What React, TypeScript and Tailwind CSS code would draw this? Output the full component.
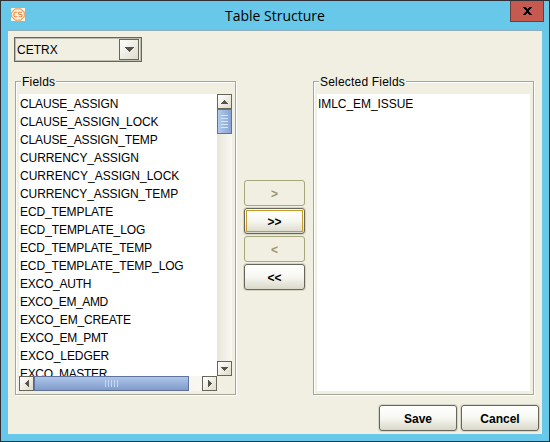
import type { ReactNode } from "react";

const FIELDS: [string, string][] = [
  ["CLAUSE_ASSIGN", "tracking-[-0.14px]"],
  ["CLAUSE_ASSIGN_LOCK", "tracking-[-0.05px]"],
  ["CLAUSE_ASSIGN_TEMP", "tracking-[-0.14px]"],
  ["CURRENCY_ASSIGN", "tracking-[-0.08px]"],
  ["CURRENCY_ASSIGN_LOCK", "tracking-[0px]"],
  ["CURRENCY_ASSIGN_TEMP", "tracking-[-0.1px]"],
  ["ECD_TEMPLATE", "tracking-[-0.12px]"],
  ["ECD_TEMPLATE_LOG", "tracking-[-0.07px]"],
  ["ECD_TEMPLATE_TEMP", "tracking-[-0.15px]"],
  ["ECD_TEMPLATE_TEMP_LOG", "tracking-[-0.14px]"],
  ["EXCO_AUTH", "tracking-[-0.24px]"],
  ["EXCO_EM_AMD", "tracking-[-0.38px]"],
  ["EXCO_EM_CREATE", "tracking-[-0.17px]"],
  ["EXCO_EM_PMT", "tracking-[-0.26px]"],
  ["EXCO_LEDGER", "tracking-[-0.08px]"],
  ["EXCO_MASTER", "tracking-[-0.33px]"],
];

function Arrow({ dir }: { dir: "up" | "down" | "left" | "right" }) {
  const d = {
    up: "M3 0h1v1h1v1h1v1h1v1H0V3h1V2h1V1h1z",
    down: "M0 0h7v1H6v1H5v1H4v1H3V3H2V2H1V1H0z",
    left: "M3 0h1v7H3V6H2V5H1V4H0V3h1V2h1V1h1z",
    right: "M0 0h1v1h1v1h1v1h1v1H3v1H2v1H1v1H0z",
  }[dir];
  const flat = dir === "up" || dir === "down";
  return (
    <svg width={flat ? 7 : 4} height={flat ? 4 : 7} shapeRendering="crispEdges">
      <path d={d} fill="#55554b" />
    </svg>
  );
}

function ScrollButton({ dir }: { dir: "up" | "down" | "left" | "right" }) {
  return (
    <div className="flex h-[15px] w-[15px] shrink-0 items-center justify-center border border-[#666659] bg-gradient-to-br from-white to-[#dedccb]">
      <Arrow dir={dir} />
    </div>
  );
}

function Button({ label, width, state = "" }: { label: string; width: string; state?: "" | "focus" | "disabled" }) {
  const look =
    state === "disabled"
      ? "border border-[#a6a77b] text-[#97976f]"
      : "border border-[#66665a] bg-gradient-to-b from-white via-[#f7f7f2] to-[#dad8c8] text-black shadow-[0_0_0_1px_#d5d5c5]";
  return (
    <button className={`flex h-[26px] shrink-0 items-center justify-center rounded-[3px] ${width} ${look}`}>
      {state === "focus" ? (
        <span className="flex h-[22px] w-[57px] items-center justify-center border border-[#c69b27] pt-px">{label}</span>
      ) : (
        <span className="pt-px">{label}</span>
      )}
    </button>
  );
}

function Group({ title, children }: { title: string; children: ReactNode }) {
  return (
    <section className="relative h-[314px] w-[221px] shrink-0 border border-[#a5a699] pl-[3px] pt-3 shadow-[1px_1px_0_#fff,inset_1px_1px_0_#fff]">
      <h2 className="absolute -top-2 left-[5px] bg-[#f1efe2] px-px text-[12px] leading-4 tracking-[0.2px]">{title}</h2>
      {children}
    </section>
  );
}

export default function App() {
  return (
    <main className="flex h-[442px] w-[550px] flex-col overflow-hidden border border-[#302f36] bg-[#67c8ea] font-['Liberation_Sans',Arial,sans-serif] text-[12px] text-black">
      <header className="flex h-[29px] shrink-0 items-start">
        <svg className="ml-[10px] mt-[7px] shrink-0" width="14" height="13" viewBox="0 0 14 13">
          <path fill="#fff5e6" d="M0 0h14v13H0z" />
          <path d="M4.3.8h5.4l3.6 3.4v4.6l-3.6 3.4H4.3L.7 8.8V4.2z" fill="#fff0dc" stroke="#f0a260" strokeWidth="1.2" />
          <path d="M6.4 4.2H4L3 5.2v2.6l1 1h2.4M11 4.2H8.3l-.7.7v.9l.7.7h1.9l.8.7v.8l-.8.8H7.6" fill="none" stroke="#ed873d" strokeWidth="1.1" />
        </svg>
        <h1 className="ml-[200px] mt-[5px] whitespace-nowrap font-['Open_Sans',sans-serif] text-[14px] leading-5">Table Structure</h1>
        <button className="ml-auto mr-[5px] flex h-[21px] w-[34px] items-center justify-center border border-t-0 border-[#6d3c39] bg-[#c65a50]">
          <svg width="9" height="8" shapeRendering="crispEdges">
            <path d="M0 0h3v1h1v1h1V1h1V0h3v1H8v1H7v1H6v2h1v1h1v1h1v1H6V7H5V6H4v1H3v1H0V7h1V6h1V5h1V3H2V2H1V1H0z" />
          </svg>
        </button>
      </header>
      <div className="mx-[7px] flex h-[404px] w-[534px] flex-col border-t border-[#91adb5] bg-[#f1efe2]">
        <div className="ml-[6px] mt-[6px] flex h-[25px] w-[128px] shrink-0 items-center justify-between border border-[#66665a] pl-[2px] pr-[2px] shadow-[inset_0_0_0_1px_#bdbdaf]">
          <span className="pt-px text-[12px]">CETRX</span>
          <div className="flex h-[21px] w-[20px] items-center justify-center border border-[#66665a] bg-gradient-to-br from-white to-[#dedccb]">
            <svg width="9" height="5" shapeRendering="crispEdges">
              <path d="M0 0h9v1H8v1H7v1H6v1H5v1H4V4H3V3H2V2H1V1H0z" fill="#55554b" />
            </svg>
          </div>
        </div>
        <div className="ml-[7px] mt-[19px] flex shrink-0">
          <Group title="Fields">
            <div className="flex h-[282px] w-[213px]">
              <ul className="w-[198px] overflow-hidden bg-white">
                {FIELDS.map(([name, tracking]) => (
                  <li key={name} className={`h-[18px] whitespace-nowrap pl-px text-[12px] leading-[21px] ${tracking}`}>{name}</li>
                ))}
              </ul>
              <div className="flex w-[15px] flex-col bg-gradient-to-r from-[#e8e6da] to-[#f9f8f3]">
                <ScrollButton dir="up" />
                <div className="flex h-[25px] shrink-0 flex-col items-center justify-center gap-[2px] border border-[#5e729b] bg-gradient-to-r from-[#b3caec] to-[#86a4d4]">
                  {[0, 1, 2, 3, 4].map((n) => (
                    <i key={n} className="h-px w-[7px] bg-[#dae6f7]" />
                  ))}
                </div>
                <div className="mt-auto"><ScrollButton dir="down" /></div>
              </div>
            </div>
            <div className="flex h-[15px] w-[198px] bg-gradient-to-r from-[#e8e6da] to-[#f9f8f3]">
              <ScrollButton dir="left" />
              <div className="flex w-[155px] items-center justify-center gap-[2px] border border-[#5e729b] bg-gradient-to-b from-[#adc6ea] to-[#7f9bc9]">
                {[0, 1, 2, 3, 4].map((n) => (
                  <i key={n} className="h-[7px] w-px bg-[#c9d9f0]" />
                ))}
              </div>
              <div className="ml-auto"><ScrollButton dir="right" /></div>
            </div>
          </Group>
          <div className="ml-[8px] mt-[99px] flex w-[61px] flex-col gap-[2px] font-bold">
            <Button label=">" width="w-[61px]" state="disabled" />
            <Button label=">>" width="w-[61px]" state="focus" />
            <Button label="<" width="w-[61px]" state="disabled" />
            <Button label="<<" width="w-[61px]" />
          </div>
          <div className="ml-[8px]">
            <Group title="Selected Fields">
              <ul className="h-[297px] w-[213px] bg-white">
                <li className="pl-px leading-[21px] tracking-[-0.06px]">IMLC_EM_ISSUE</li>
              </ul>
            </Group>
          </div>
        </div>
        <footer className="ml-[371px] mt-[10px] flex gap-1 text-[12px] font-bold">
          <Button label="Save" width="w-[78px]" />
          <Button label="Cancel" width="w-[78px]" />
        </footer>
      </div>
    </main>
  );
}
